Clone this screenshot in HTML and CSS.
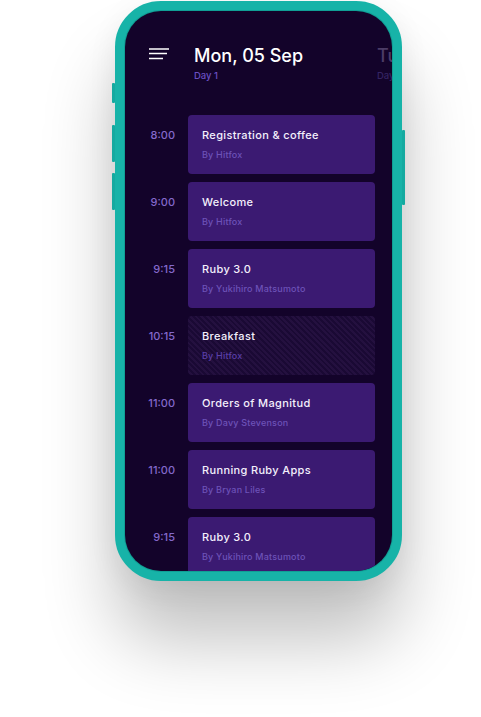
FILE: index.html
```html
<!DOCTYPE html>
<html lang="en">
<head>
    <meta charset="UTF-8">
    <meta name="viewport" content="width=device-width, initial-scale=1.0">
    <title>Conference Schedule</title>
    <link rel="stylesheet" href="styles.css">
</head>
<body>
    <div class="stage">
        <div class="phone">
            <span class="side-btn btn-mute"></span>
            <span class="side-btn btn-vol-up"></span>
            <span class="side-btn btn-vol-down"></span>
            <span class="side-btn btn-power"></span>

            <div class="screen">
                <div class="header">
                    <svg class="menu-icon" width="20" height="12" viewBox="0 0 20 12">
                        <path d="M0 1H20M0 5.5H18M0 10.5H14" stroke="#fff" stroke-width="1.5" fill="none"/>
                    </svg>
                    <div class="days">
                        <div class="day">
                            <div class="day-date">Mon, 05 Sep</div>
                            <div class="day-label">Day 1</div>
                        </div>
                        <div class="day day-next">
                            <div class="day-date">Tue, 06 Sep</div>
                            <div class="day-label">Day 2</div>
                        </div>
                    </div>
                </div>

                <div class="schedule">
                    <div class="slot">
                        <div class="time">8:00</div>
                        <div class="talk">
                            <div class="talk-title">Registration &amp; coffee</div>
                            <div class="talk-by">By Hitfox</div>
                        </div>
                    </div>
                    <div class="slot">
                        <div class="time">9:00</div>
                        <div class="talk">
                            <div class="talk-title">Welcome</div>
                            <div class="talk-by">By Hitfox</div>
                        </div>
                    </div>
                    <div class="slot">
                        <div class="time">9:15</div>
                        <div class="talk">
                            <div class="talk-title">Ruby 3.0</div>
                            <div class="talk-by">By Yukihiro Matsumoto</div>
                        </div>
                    </div>
                    <div class="slot">
                        <div class="time">10:15</div>
                        <div class="talk talk-break">
                            <div class="talk-title">Breakfast</div>
                            <div class="talk-by">By Hitfox</div>
                        </div>
                    </div>
                    <div class="slot">
                        <div class="time">11:00</div>
                        <div class="talk">
                            <div class="talk-title">Orders of Magnitud</div>
                            <div class="talk-by">By Davy Stevenson</div>
                        </div>
                    </div>
                    <div class="slot">
                        <div class="time">11:00</div>
                        <div class="talk">
                            <div class="talk-title">Running Ruby Apps</div>
                            <div class="talk-by">By Bryan Liles</div>
                        </div>
                    </div>
                    <div class="slot">
                        <div class="time">9:15</div>
                        <div class="talk">
                            <div class="talk-title">Ruby 3.0</div>
                            <div class="talk-by">By Yukihiro Matsumoto</div>
                        </div>
                    </div>
                </div>
            </div>
        </div>
    </div>
</body>
</html>
```

FILE: styles.css
```css
html, body {
    margin: 0;
    padding: 0;
    background: #fff;
    overflow: hidden;
}
body {
    font-family: "Inter", "Open Sans", sans-serif;
    width: 481px;
    height: 717px;
}
.stage {
    padding: 1px 0 0 115px;
}
.phone {
    position: relative;
    width: 287px;
    height: 580px;
    box-sizing: border-box;
    border: 10px solid #17b3a8;
    border-radius: 46px;
    background: #17b3a8;
    box-shadow: 0 60px 72px rgba(0,0,0,0.24), 0 8px 30px rgba(0,0,0,0.07);
}
.side-btn {
    position: absolute;
    width: 3px;
    background: #15aaa0;
    border-radius: 1px;
}
.btn-mute { left: -13px; top: 72px; height: 20px; }
.btn-vol-up { left: -13px; top: 114px; height: 37px; }
.btn-vol-down { left: -13px; top: 162px; height: 37px; }
.btn-power { right: -13px; top: 119px; height: 75px; }

.screen {
    height: 100%;
    border-radius: 36px;
    overflow: hidden;
    background: #13032a;
    box-shadow: 0 0 0 1px #109f95;
}
.header {
    display: flex;
    padding: 34px 0 0 24px;
    overflow: hidden;
}
.menu-icon {
    flex: none;
    margin-top: 3px;
    margin-right: 25px;
}
.days {
    display: flex;
}
.day {
    flex: none;
    width: 183px;
}
.day-date {
    color: #fff;
    font-size: 18px;
    line-height: 22px;
    font-weight: 500;
    white-space: nowrap;
}
.day-label {
    margin-top: 3px;
    color: #6a4fc2;
    font-size: 9.5px;
    line-height: 12px;
    font-weight: 500;
}
.day-next .day-date { color: #4c3c66; }
.day-next .day-label { color: #352463; }

.schedule {
    display: flex;
    flex-direction: column;
    gap: 8px;
    padding-top: 33px;
}
.slot {
    display: flex;
    gap: 13px;
}
.time {
    flex: none;
    width: 50px;
    padding-top: 13px;
    text-align: right;
    color: #8469cc;
    font-size: 11px;
    line-height: 14px;
    font-weight: 500;
}
.talk {
    flex: none;
    width: 187px;
    height: 59px;
    box-sizing: border-box;
    padding: 13px 14px 0;
    background: #3b1a72;
    border-radius: 4px;
}
.talk-break {
    background: repeating-linear-gradient(45deg, #1a0934 0, #1a0934 2px, #24103f 2px, #24103f 4px);
}
.talk-title {
    color: #f4f0fc;
    font-size: 11px;
    line-height: 14px;
    font-weight: 500;
    letter-spacing: 0.35px;
    white-space: nowrap;
}
.talk-by {
    margin-top: 7px;
    color: #6d52b8;
    font-size: 9px;
    line-height: 11px;
    font-weight: 500;
    letter-spacing: 0.2px;
    white-space: nowrap;
}
.talk-break .talk-by { color: #5a3fa8; }
```
